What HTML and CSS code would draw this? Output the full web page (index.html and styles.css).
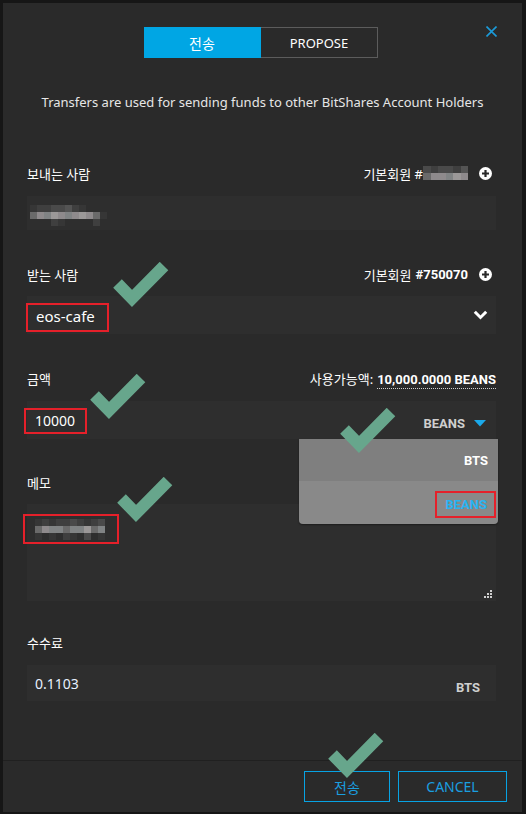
FILE: index.html
```html
<!DOCTYPE html>
<html lang="ko">
<head>
<meta charset="utf-8">
<link rel="stylesheet" href="styles.css">
</head>
<body>
<div class="modal">
  <button class="close" aria-label="close">
    <svg width="11" height="11" viewBox="0 0 11 11"><path d="M0.5 0.5 L10.5 10.5 M10.5 0.5 L0.5 10.5" stroke="#1b9ad8" stroke-width="1.6" fill="none"/></svg>
  </button>

  <div class="tabs">
    <span class="tab active">전송</span>
    <span class="tab">PROPOSE</span>
  </div>

  <p class="desc">Transfers are used for sending funds to other BitShares Account Holders</p>

  <div class="field first">
    <div class="row">
      <span class="label">보내는 사람</span>
      <span class="meta">기본회원 #<span class="blur hb"><i class="c3"></i><i class="c2"></i><i class="c3"></i><i class="c3"></i><i class="c2"></i><i class="c4"></i><i class="c5"></i><i class="c7"></i><i class="c7"></i><i class="c6"></i><i class="c8"></i><i class="c7"></i></span>
        <svg class="plus" width="13" height="13" viewBox="0 0 13 13"><circle cx="6.5" cy="6.5" r="6.5" fill="#fff"/><path d="M6.5 3 V10 M3 6.5 H10" stroke="#2a2a2a" stroke-width="2.2"/></svg>
      </span>
    </div>
    <div class="input h34">
      <span class="blur sb">
        <i class="c1"></i><i class="c2"></i><i class="c2"></i><i class="c3"></i><i class="c3"></i><i class="c4"></i><i class="c2"></i><i class="c1"></i><i class="c0"></i><i class="c0"></i><i class="c0"></i>
        <i class="c5"></i><i class="c7"></i><i class="c6"></i><i class="c8"></i><i class="c7"></i><i class="c6"></i><i class="c7"></i><i class="c8"></i><i class="c7"></i><i class="c5"></i><i class="c1"></i>
        <i class="c0"></i><i class="c0"></i><i class="c0"></i><i class="c2"></i><i class="c1"></i><i class="c0"></i><i class="c0"></i><i class="c0"></i><i class="c0"></i><i class="c2"></i><i class="c0"></i>
      </span>
    </div>
  </div>

  <div class="field f2">
    <div class="row">
      <span class="label">받는 사람</span>
      <span class="meta">기본회원 <b>#750070</b>
        <svg class="plus" width="13" height="13" viewBox="0 0 13 13"><circle cx="6.5" cy="6.5" r="6.5" fill="#fff"/><path d="M6.5 3 V10 M3 6.5 H10" stroke="#2a2a2a" stroke-width="2.2"/></svg>
      </span>
    </div>
    <div class="input h38">
      <span class="mark to">eos-cafe</span>
      <svg class="chev" width="15" height="10" viewBox="0 0 15 10"><path d="M1.8 1.8 L7.5 7.5 L13.2 1.8" stroke="#fff" stroke-width="3" fill="none"/></svg>
    </div>
  </div>

  <div class="field f3">
    <div class="row">
      <span class="label">금액</span>
      <span class="meta">사용가능액: <b class="dotted">10,000.0000 BEANS</b></span>
    </div>
    <div class="input h38 amount">
      <span class="mark amt">10000</span>
      <span class="asset">BEANS <svg width="12" height="7" viewBox="0 0 12 7"><path d="M0 0 H12 L6 6.5 Z" fill="#1ba9ea"/></svg></span>
      <ul class="dropdown">
        <li class="opt">BTS</li>
        <li class="opt sel"><span class="mark selbox">BEANS</span></li>
      </ul>
    </div>
  </div>

  <div class="field f4">
    <div class="row">
      <span class="label">메모</span>
    </div>
    <div class="memo">
      <span class="mark memobox">
        <span class="blur mb">
          <i class="c1"></i><i class="c2"></i><i class="c1"></i><i class="c2"></i><i class="c2"></i><i class="c3"></i><i class="c2"></i><i class="c1"></i><i class="c2"></i><i class="c3"></i>
          <i class="c5"></i><i class="c7"></i><i class="c6"></i><i class="c6"></i><i class="c5"></i><i class="c6"></i><i class="c6"></i><i class="c8"></i><i class="c5"></i><i class="c6"></i>
          <i class="c1"></i><i class="c0"></i><i class="c1"></i><i class="c0"></i><i class="c2"></i><i class="c1"></i><i class="c0"></i><i class="c3"></i><i class="c0"></i><i class="c1"></i>
        </span>
      </span>
      <svg class="grip" width="9" height="9" viewBox="0 0 9 9" fill="#d0d0d0"><rect x="6" y="0" width="2" height="2"/><rect x="3" y="3" width="2" height="2"/><rect x="6" y="3" width="2" height="2"/><rect x="0" y="6" width="2" height="2"/><rect x="3" y="6" width="2" height="2"/><rect x="6" y="6" width="2" height="2"/></svg>
    </div>
  </div>

  <div class="field f5">
    <div class="row">
      <span class="label">수수료</span>
    </div>
    <div class="input h36">
      <span class="fee">0.1103</span>
      <span class="asset plain">BTS</span>
    </div>
  </div>

  <div class="footer">
    <button class="btn send">전송</button>
    <button class="btn cancel">CANCEL</button>
  </div>

  <svg class="check k1" width="56" height="46" viewBox="0 0 56 46"><polyline points="4.5,21.5 19,36.5 51,4" fill="none" stroke="#67a68c" stroke-width="12"/></svg>
  <svg class="check k2" width="56" height="46" viewBox="0 0 56 46"><polyline points="4.5,21.5 19,36.5 51,4" fill="none" stroke="#67a68c" stroke-width="12"/></svg>
  <svg class="check k3" width="56" height="46" viewBox="0 0 56 46"><polyline points="4.5,21.5 19,36.5 51,4" fill="none" stroke="#67a68c" stroke-width="12"/></svg>
  <svg class="check k4" width="56" height="46" viewBox="0 0 56 46"><polyline points="4.5,21.5 19,36.5 51,4" fill="none" stroke="#67a68c" stroke-width="12"/></svg>
  <svg class="check k5" width="56" height="46" viewBox="0 0 56 46"><polyline points="4.5,21.5 19,36.5 51,4" fill="none" stroke="#67a68c" stroke-width="12"/></svg>
</div>
</body>
</html>
```

FILE: styles.css
```css
* { box-sizing: border-box; }
html, body { margin: 0; padding: 0; }
body {
  width: 526px;
  height: 814px;
  background: #161616;
  font-family: "Noto Sans", "Noto Sans CJK KR", sans-serif;
  color: #fff;
  overflow: hidden;
}
.modal {
  position: relative;
  margin: 3px 0 0 3px;
  width: 519px;
  height: 809px;
  background: #2a2a2a;
  display: flex;
  flex-direction: column;
}
.close {
  position: absolute;
  top: 23px;
  right: 25px;
  padding: 0;
  border: 0;
  background: none;
  display: flex;
}
.tabs {
  margin: 24px 0 0 141px;
  display: flex;
}
.tab {
  width: 117px;
  height: 31px;
  display: flex;
  align-items: center;
  justify-content: center;
  font-size: 13px;
  border: 1px solid #5c5c5c;
  border-left: 0;
  color: #fff;
}
.tab.active {
  background: #00a6e4;
  border-color: #00a6e4;
  font-size: 14px;
}
.desc {
  margin: 34px 0 0;
  text-align: center;
  font-size: 13px;
  line-height: 20px;
  color: #e6e6e6;
}
.field {
  margin: 34px 26px 0 24px;
  display: flex;
  flex-direction: column;
  gap: 12px;
}
.field.first { margin-top: 51px; gap: 13px; }
.field.f3 { margin-top: 34px; gap: 13px; }
.field.f4 { margin-top: 33px; gap: 12px; }
.field.f5 { margin-top: 31px; gap: 13px; }
.row {
  height: 20px;
  display: flex;
  align-items: center;
  justify-content: space-between;
  font-size: 13px;
}
.label { color: #fff; }
.meta {
  display: flex;
  align-items: center;
  color: #fff;
  font-size: 13px;
}
.meta b { font-family: "Roboto", "Noto Sans", sans-serif; font-weight: 700; margin-left: 4px; }
.plus { margin: 0 4px 0 11px; }
.dotted {
  border-bottom: 1px dotted #cfcfcf;
  line-height: 15px;
  margin-top: 4px;
  padding-bottom: 1px;
}
.input {
  position: relative;
  background: #2e2e2e;
  display: flex;
  align-items: center;
  justify-content: space-between;
  padding: 0 16px 0 3px;
}
.h34 { height: 34px; }
.h38 { height: 38px; }
.h36 { height: 36px; }
.blur { display: grid; }
.blur i { display: block; }
.sb { grid-template-columns: repeat(11, 7px); grid-auto-rows: 7px; margin-top: 4px; }
.hb { grid-template-columns: repeat(6, 7.5px); grid-auto-rows: 7px; }
.mb { grid-template-columns: repeat(10, 7px); grid-auto-rows: 7px; }
.c0 { background: transparent; }
.c1 { background: #363636; }
.c2 { background: #3f3f3f; }
.c3 { background: #4a4a4a; }
.c4 { background: #545454; }
.c5 { background: #6a6a6a; }
.c6 { background: #808384; }
.c7 { background: #8e8a8c; }
.c8 { background: #9b9898; }
.mark {
  border: 2px solid #e5202a;
  display: inline-flex;
  align-items: center;
}
.to {
  margin-left: -4px;
  margin-top: 4px;
  height: 29px;
  padding: 0 12px 2px 8px;
  font-size: 15px;
}
.chev { margin-right: -8px; }
.amount { padding-right: 10px; }
.amt {
  margin-left: -6px;
  margin-top: 2px;
  height: 26px;
  padding: 0 10px 1px 9px;
  font-size: 14px;
}
.asset {
  display: flex;
  align-items: center;
  gap: 9px;
  font-family: "Roboto", "Noto Sans", sans-serif;
  font-weight: 700;
  font-size: 13px;
  color: #cfcfcf;
  margin-top: 6px;
}
.asset.plain { margin-top: 8px; }
.dropdown {
  position: absolute;
  top: 100%;
  right: -2px;
  width: 199px;
  margin: 0;
  padding: 0;
  list-style: none;
  border-radius: 0 0 4px 4px;
  overflow: hidden;
  box-shadow: 0 1px 2px rgba(0,0,0,0.4);
  z-index: 2;
}
.opt {
  height: 42px;
  display: flex;
  align-items: center;
  justify-content: flex-end;
  padding-right: 10px;
  background: #7f7f7f;
  font-family: "Roboto", "Noto Sans", sans-serif;
  font-weight: 700;
  font-size: 13px;
  color: #fff;
}
.opt.sel { height: 43px; background: #898989; padding-right: 2px; }
.selbox {
  height: 27px;
  padding: 0 7px 0 8px;
  color: #28b4f2;
  margin-top: 4px;
}
.memo {
  position: relative;
  height: 97px;
  background: #2e2e2e;
  padding: 5px 0 0 0;
}
.memobox {
  margin-left: -4px;
  height: 30px;
  padding: 3px 12px 2px 10px;
}
.grip { position: absolute; right: 3px; bottom: 2px; }
.fee { font-size: 14px; color: #e8f0ff; margin-left: 5px; }
.footer {
  margin-top: auto;
  border-top: 1px solid #202020;
  padding: 10px 15px 10px;
  display: flex;
  justify-content: flex-end;
  gap: 8px;
}
.btn {
  height: 31px;
  border: 1px solid #07a3e4;
  background: transparent;
  color: #1a9fe0;
  font-family: "Noto Sans", "Noto Sans CJK KR", sans-serif;
  font-size: 14px;
  padding: 0;
}
.send { width: 86px; }
.cancel { width: 109px; }
.check { position: absolute; z-index: 5; }
.k1 { left: 110px; top: 259px; }
.k2 { left: 87px; top: 371px; }
.k3 { left: 337px; top: 405px; }
.k4 { left: 114px; top: 474px; }
.k5 { left: 325px; top: 730px; }
```
